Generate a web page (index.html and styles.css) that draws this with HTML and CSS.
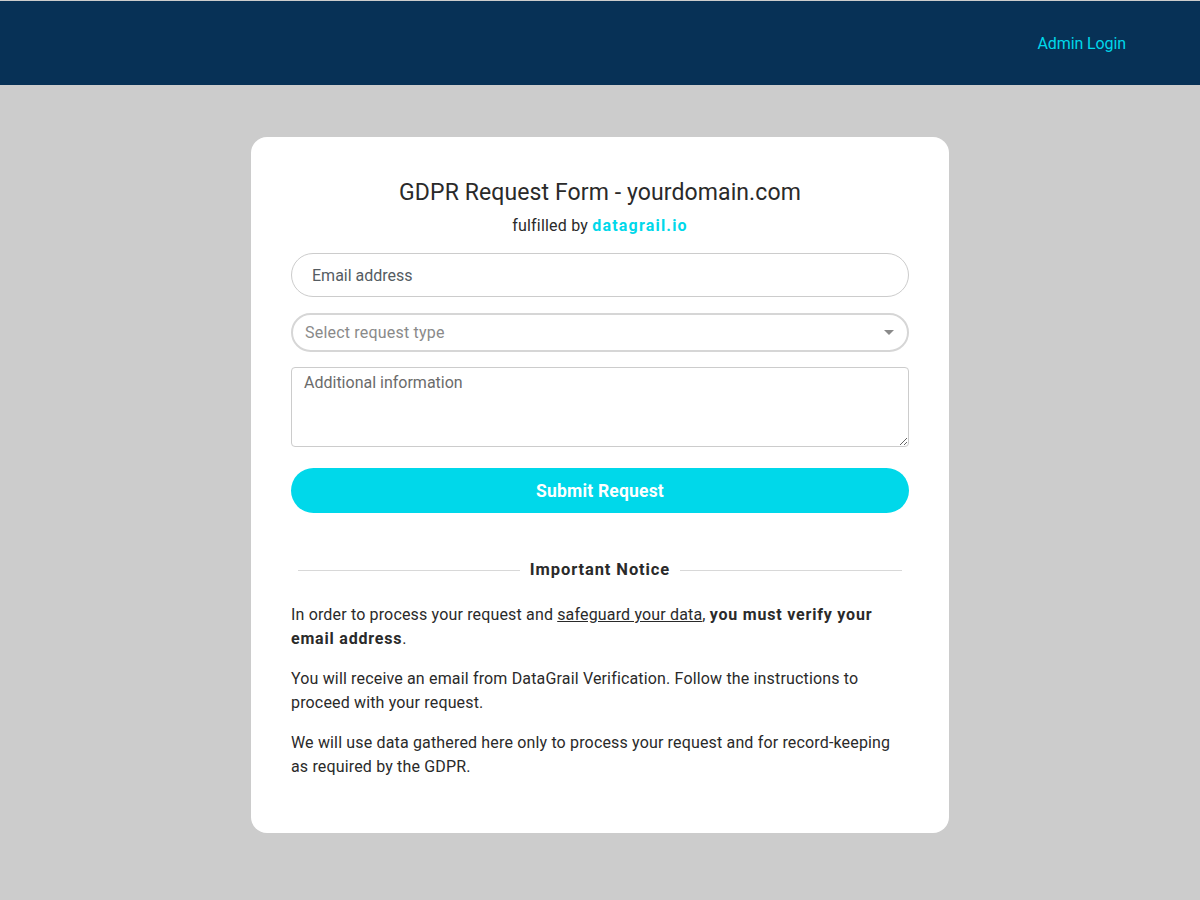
FILE: index.html
```html
<!DOCTYPE html>
<html>
<head>
<meta charset="utf-8">
<link rel="stylesheet" href="styles.css">
</head>
<body>
<header class="topbar">
  <a class="admin-link" href="#">Admin Login</a>
</header>
<main class="page">
  <section class="card">
    <h1 class="title">GDPR Request Form - yourdomain.com</h1>
    <p class="subtitle">fulfilled by <a class="brand" href="#">datagrail.io</a></p>
    <form class="form">
      <input class="field email" type="text" placeholder="Email address">
      <div class="select-wrap">
        <select class="field select">
          <option>Select request type</option>
        </select>
        <span class="caret"></span>
      </div>
      <textarea class="field textarea" placeholder="Additional information"></textarea>
      <button class="submit" type="button">Submit Request</button>
    </form>
    <div class="divider"><span class="divider-label">Important Notice</span></div>
    <p class="notice">In order to process your request and <u>safeguard your data</u>, <b class="strong">you must verify your email address</b>.</p>
    <p class="notice">You will receive an email from DataGrail Verification. Follow the instructions to proceed with your request.</p>
    <p class="notice">We will use data gathered here only to process your request and for record-keeping as required by the GDPR.</p>
  </section>
</main>
</body>
</html>
```
FILE: styles.css
```css
html, body {
  margin: 0;
  padding: 0;
}
body {
  background: #cccccc;
  font-family: Roboto, "Liberation Sans", sans-serif;
  color: #333333;
  padding-top: 1px;
}
.topbar {
  background: #073156;
  height: 84px;
  display: flex;
  align-items: center;
  justify-content: flex-end;
  padding-right: 74px;
}
.admin-link {
  color: #00d8ea;
  font-size: 16px;
  text-decoration: none;
  letter-spacing: -0.1px;
}
.page {
  display: flex;
  justify-content: center;
  padding-top: 52px;
  padding-bottom: 60px;
}
.card {
  background: #ffffff;
  width: 698px;
  box-sizing: border-box;
  border-radius: 16px;
  padding: 40px 40px 54px;
}
.title {
  margin: 0;
  text-align: center;
  font-size: 23px;
  font-weight: 400;
  color: #2a2a2a;
  line-height: 32px;
  letter-spacing: 0.1px;
}
.subtitle {
  margin: 6px 0 0;
  text-align: center;
  font-size: 16px;
  line-height: 22px;
  color: #2a2a2a;
  letter-spacing: 0.2px;
}
.brand {
  color: #00d8ea;
  font-weight: 700;
  text-decoration: none;
  letter-spacing: 1.2px;
}
.form {
  display: flex;
  flex-direction: column;
  margin-top: 16px;
}
.field {
  font-family: Roboto, "Liberation Sans", sans-serif;
  font-size: 16px;
  box-sizing: border-box;
  width: 100%;
  background: #fff;
  outline: none;
}
.email {
  height: 44px;
  border: 1px solid #cccccc;
  border-radius: 22px;
  padding: 0 20px;
  color: #555;
}
.email::placeholder {
  color: #555c62;
}
.select-wrap {
  position: relative;
  margin-top: 16px;
}
.select {
  height: 39px;
  border: 2px solid #d6d6d6;
  border-radius: 20px;
  padding: 0 12px;
  color: #8a8a8a;
  appearance: none;
  -webkit-appearance: none;
  display: block;
  letter-spacing: 0.2px;
}
.caret {
  position: absolute;
  right: 15px;
  top: 17px;
  width: 0;
  height: 0;
  border-left: 5px solid transparent;
  border-right: 5px solid transparent;
  border-top: 5px solid #8a8a8a;
}
.textarea {
  margin-top: 15px;
  height: 80px;
  border: 1px solid #cccccc;
  border-radius: 4px;
  padding: 5px 12px;
  resize: vertical;
  color: #555;
}
.textarea::placeholder {
  color: #6b6b6b;
}
.submit {
  margin-top: 21px;
  height: 45px;
  border: none;
  border-radius: 23px;
  background: #00d8ea;
  color: #ffffff;
  font-family: Roboto, "Liberation Sans", sans-serif;
  font-size: 17.5px;
  font-weight: 700;
  letter-spacing: 0.2px;
  cursor: pointer;
}
.divider {
  display: flex;
  align-items: center;
  gap: 10px;
  margin: 47px 7px 0;
}
.divider::before,
.divider::after {
  content: "";
  flex: 1;
  height: 1px;
  background: #d8d8d8;
}
.divider-label {
  font-weight: 700;
  font-size: 16.5px;
  color: #2a2a2a;
  line-height: 20px;
  letter-spacing: 0.9px;
}
.notice {
  margin: 23px 0 0;
  font-size: 16px;
  line-height: 24px;
  color: #2a2a2a;
  letter-spacing: 0.16px;
}
.notice + .notice {
  margin-top: 16px;
}
.strong {
  font-weight: 700;
  letter-spacing: 0.8px;
}
```
